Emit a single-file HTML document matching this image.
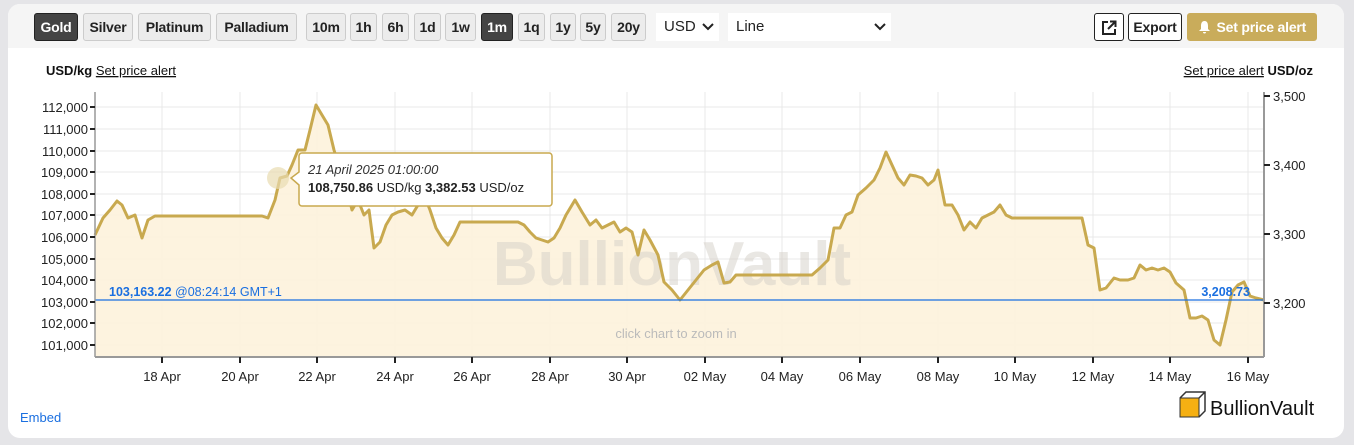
<!DOCTYPE html>
<html><head><meta charset="utf-8"><style>
*{margin:0;padding:0;box-sizing:border-box}
body{width:1354px;height:445px;background:#e5e5e8;font-family:"Liberation Sans",Arial,sans-serif;position:relative;overflow:hidden}
.card{position:absolute;left:8px;top:4px;width:1336px;height:434px;background:#fff;border-radius:12px;overflow:hidden}
.hdr{position:absolute;left:0;top:0;width:100%;height:44px;background:#f5f5f5}
.b{position:absolute;top:9px;height:28px;line-height:26px;border:1px solid #ccc;border-radius:3px;background:#ececec;font-weight:bold;font-size:14px;text-align:center;color:#222;letter-spacing:-0.2px}
.b.on{background:#444;color:#fff;border-color:#222}
.sel{position:absolute;top:9px;height:28px;background:#fff;font-size:15px;line-height:28px;padding-left:8px;color:#222}
svg{position:absolute;left:0;top:0}
</style></head><body>
<div class="card"><div class="hdr">
<div class="b on" style="left:26px;width:44px">Gold</div>
<div class="b" style="left:75px;width:50px">Silver</div>
<div class="b" style="left:130px;width:73px">Platinum</div>
<div class="b" style="left:208px;width:81px">Palladium</div>
<div class="b" style="left:298px;width:40px">10m</div>
<div class="b" style="left:342px;width:27px">1h</div>
<div class="b" style="left:374px;width:27px">6h</div>
<div class="b" style="left:406px;width:27px">1d</div>
<div class="b" style="left:437px;width:31px">1w</div>
<div class="b on" style="left:473px;width:32px">1m</div>
<div class="b" style="left:510px;width:27px">1q</div>
<div class="b" style="left:542px;width:26px">1y</div>
<div class="b" style="left:572px;width:26px">5y</div>
<div class="b" style="left:603px;width:35px">20y</div>
<div class="sel" style="left:648px;width:63px">USD<svg style="position:absolute;left:46px;top:10px" width="12" height="8" viewBox="0 0 12 8"><path d="M1,1 L6,6 L11,1" fill="none" stroke="#222" stroke-width="2"/></svg></div>
<div class="sel" style="left:720px;width:163px">Line<svg style="position:absolute;left:146px;top:10px" width="12" height="8" viewBox="0 0 12 8"><path d="M1,1 L6,6 L11,1" fill="none" stroke="#222" stroke-width="2"/></svg></div>
<div class="b" style="left:1086px;width:30px;background:#fff;border-color:#222"><svg style="position:absolute;left:6px;top:6px" width="16" height="16" viewBox="0 0 16 16"><path d="M7,2 H2 V14 H14 V9" fill="none" stroke="#222" stroke-width="2"/><path d="M9,1.5 H14.5 V7 M14,2 L7,9" fill="none" stroke="#222" stroke-width="2"/></svg></div>
<div class="b" style="left:1120px;width:54px;background:#fff;border-color:#222">Export</div>
<div class="b" style="left:1179px;width:130px;background:#c9ac5b;border-color:#c9ac5b;color:#fff"><svg style="position:static;vertical-align:-2px;margin-right:2px" width="13" height="14" viewBox="0 0 13 14"><path d="M6.5,1 C3.5,1 3,4 3,6 V9 L1,11 H12 L10,9 V6 C10,4 9.5,1 6.5,1Z M5,12 a1.5,1.5 0 0 0 3,0Z" fill="#fff"/></svg> Set price alert</div>
</div></div>
<svg width="1354" height="445" viewBox="0 0 1354 445" font-family="Liberation Sans,Arial,sans-serif">
<text x="46" y="75" font-size="13" font-weight="bold" fill="#111">USD/kg <tspan font-weight="normal" text-decoration="underline">Set price alert</tspan></text>
<text x="1313" y="75" font-size="13" text-anchor="end" fill="#111"><tspan text-decoration="underline">Set price alert</tspan> <tspan font-weight="bold">USD/oz</tspan></text>
<g stroke="#e8e8e8" stroke-width="1">
<line x1="95" y1="107" x2="1264" y2="107"/><line x1="95" y1="129" x2="1264" y2="129"/><line x1="95" y1="151" x2="1264" y2="151"/><line x1="95" y1="172" x2="1264" y2="172"/><line x1="95" y1="194" x2="1264" y2="194"/><line x1="95" y1="215" x2="1264" y2="215"/><line x1="95" y1="237" x2="1264" y2="237"/><line x1="95" y1="259" x2="1264" y2="259"/><line x1="95" y1="280" x2="1264" y2="280"/><line x1="95" y1="302" x2="1264" y2="302"/><line x1="95" y1="323" x2="1264" y2="323"/><line x1="95" y1="345" x2="1264" y2="345"/>
<line x1="162" y1="92" x2="162" y2="356"/><line x1="240" y1="92" x2="240" y2="356"/><line x1="317" y1="92" x2="317" y2="356"/><line x1="395" y1="92" x2="395" y2="356"/><line x1="472" y1="92" x2="472" y2="356"/><line x1="550" y1="92" x2="550" y2="356"/><line x1="627" y1="92" x2="627" y2="356"/><line x1="705" y1="92" x2="705" y2="356"/><line x1="782" y1="92" x2="782" y2="356"/><line x1="860" y1="92" x2="860" y2="356"/><line x1="938" y1="92" x2="938" y2="356"/><line x1="1015" y1="92" x2="1015" y2="356"/><line x1="1093" y1="92" x2="1093" y2="356"/><line x1="1170" y1="92" x2="1170" y2="356"/><line x1="1248" y1="92" x2="1248" y2="356"/>
</g>
<polygon fill="#fdf2dc" opacity="0.9" points="95,356 95,235 103,218 110,210 117,201 122,205 128,218 135,215 142,238 148,220 155,216 262,216 268,218 275,200 280,178 287,176 292,165 298,150 305,150 310,130 316,105 322,115 328,125 334,150 340,170 346,185 352,210 358,200 364,215 369,210 374,248 380,242 386,225 392,215 398,212 405,210 412,215 418,205 424,195 430,210 436,228 442,238 448,245 454,235 460,222 518,222 524,225 530,232 536,238 542,240 548,242 554,238 560,228 566,215 575,200 582,212 590,225 596,220 602,228 608,225 614,222 620,232 626,228 632,232 638,255 644,230 650,240 658,255 664,282 672,290 680,300 688,290 696,280 704,270 712,265 718,262 724,283 730,282 736,275 812,275 820,268 828,260 834,228 840,228 846,215 852,212 858,195 866,188 874,180 880,168 886,152 892,165 898,178 904,185 910,175 916,176 922,178 928,185 934,180 938,170 945,205 952,205 958,215 964,230 970,222 976,228 982,218 988,215 994,212 1000,205 1006,215 1012,218 1082,218 1088,245 1094,248 1100,290 1106,288 1114,278 1120,280 1128,280 1134,278 1140,265 1146,270 1152,268 1158,270 1164,268 1170,272 1176,283 1184,290 1190,318 1196,318 1202,316 1208,320 1214,340 1220,345 1226,320 1232,292 1238,285 1244,282 1250,296 1256,298 1264,300 1264,356"/>
<text x="672" y="285" font-size="62" font-weight="bold" fill="#d5d0c8" opacity="0.5" text-anchor="middle">BullionVault</text>
<polyline fill="none" stroke="#c8a94f" stroke-width="3" stroke-linejoin="round" points="95,235 103,218 110,210 117,201 122,205 128,218 135,215 142,238 148,220 155,216 262,216 268,218 275,200 280,178 287,176 292,165 298,150 305,150 310,130 316,105 322,115 328,125 334,150 340,170 346,185 352,210 358,200 364,215 369,210 374,248 380,242 386,225 392,215 398,212 405,210 412,215 418,205 424,195 430,210 436,228 442,238 448,245 454,235 460,222 518,222 524,225 530,232 536,238 542,240 548,242 554,238 560,228 566,215 575,200 582,212 590,225 596,220 602,228 608,225 614,222 620,232 626,228 632,232 638,255 644,230 650,240 658,255 664,282 672,290 680,300 688,290 696,280 704,270 712,265 718,262 724,283 730,282 736,275 812,275 820,268 828,260 834,228 840,228 846,215 852,212 858,195 866,188 874,180 880,168 886,152 892,165 898,178 904,185 910,175 916,176 922,178 928,185 934,180 938,170 945,205 952,205 958,215 964,230 970,222 976,228 982,218 988,215 994,212 1000,205 1006,215 1012,218 1082,218 1088,245 1094,248 1100,290 1106,288 1114,278 1120,280 1128,280 1134,278 1140,265 1146,270 1152,268 1158,270 1164,268 1170,272 1176,283 1184,290 1190,318 1196,318 1202,316 1208,320 1214,340 1220,345 1226,320 1232,292 1238,285 1244,282 1250,296 1256,298 1264,300"/>
<line x1="95" y1="300" x2="1264" y2="300" stroke="#1a6fe0" stroke-width="1.3"/>
<text x="109" y="296" font-size="12.5" fill="#1a6fe0"><tspan font-weight="bold">103,163.22</tspan> @08:24:14 GMT+1</text>
<text x="1250" y="296" font-size="12.5" fill="#1a6fe0" font-weight="bold" text-anchor="end">3,208.73</text>
<text x="676" y="338" font-size="13" fill="#bbb" text-anchor="middle">click chart to zoom in</text>
<line x1="95" y1="92" x2="95" y2="357" stroke="#999" stroke-width="1.5"/>
<line x1="1264" y1="92" x2="1264" y2="357" stroke="#999" stroke-width="2"/>
<line x1="95" y1="357" x2="1264" y2="357" stroke="#999" stroke-width="2"/>
<g font-size="13" fill="#222" text-anchor="end">
<text x="88" y="112">112,000</text><text x="88" y="134">111,000</text><text x="88" y="156">110,000</text><text x="88" y="177">109,000</text><text x="88" y="199">108,000</text><text x="88" y="220">107,000</text><text x="88" y="242">106,000</text><text x="88" y="264">105,000</text><text x="88" y="285">104,000</text><text x="88" y="307">103,000</text><text x="88" y="328">102,000</text><text x="88" y="350">101,000</text>
</g>
<g stroke="#222" stroke-width="2"><line x1="90" y1="107" x2="95" y2="107"/><line x1="90" y1="129" x2="95" y2="129"/><line x1="90" y1="151" x2="95" y2="151"/><line x1="90" y1="172" x2="95" y2="172"/><line x1="90" y1="194" x2="95" y2="194"/><line x1="90" y1="215" x2="95" y2="215"/><line x1="90" y1="237" x2="95" y2="237"/><line x1="90" y1="259" x2="95" y2="259"/><line x1="90" y1="280" x2="95" y2="280"/><line x1="90" y1="302" x2="95" y2="302"/><line x1="90" y1="323" x2="95" y2="323"/><line x1="90" y1="345" x2="95" y2="345"/>
<line x1="1264" y1="96" x2="1270" y2="96"/><line x1="1264" y1="165" x2="1270" y2="165"/><line x1="1264" y1="234" x2="1270" y2="234"/><line x1="1264" y1="303" x2="1270" y2="303"/></g>
<g font-size="13" fill="#222"><text x="1273" y="101">3,500</text><text x="1273" y="170">3,400</text><text x="1273" y="239">3,300</text><text x="1273" y="308">3,200</text></g>
<g stroke="#222" stroke-width="2"><line x1="162" y1="357" x2="162" y2="363"/><line x1="240" y1="357" x2="240" y2="363"/><line x1="317" y1="357" x2="317" y2="363"/><line x1="395" y1="357" x2="395" y2="363"/><line x1="472" y1="357" x2="472" y2="363"/><line x1="550" y1="357" x2="550" y2="363"/><line x1="627" y1="357" x2="627" y2="363"/><line x1="705" y1="357" x2="705" y2="363"/><line x1="782" y1="357" x2="782" y2="363"/><line x1="860" y1="357" x2="860" y2="363"/><line x1="938" y1="357" x2="938" y2="363"/><line x1="1015" y1="357" x2="1015" y2="363"/><line x1="1093" y1="357" x2="1093" y2="363"/><line x1="1170" y1="357" x2="1170" y2="363"/><line x1="1248" y1="357" x2="1248" y2="363"/></g>
<g font-size="13" fill="#222" text-anchor="middle"><text x="162" y="381">18 Apr</text><text x="240" y="381">20 Apr</text><text x="317" y="381">22 Apr</text><text x="395" y="381">24 Apr</text><text x="472" y="381">26 Apr</text><text x="550" y="381">28 Apr</text><text x="627" y="381">30 Apr</text><text x="705" y="381">02 May</text><text x="782" y="381">04 May</text><text x="860" y="381">06 May</text><text x="938" y="381">08 May</text><text x="1015" y="381">10 May</text><text x="1093" y="381">12 May</text><text x="1170" y="381">14 May</text><text x="1248" y="381">16 May</text></g>
<circle cx="278" cy="178" r="11" fill="#e8dcb0" opacity="0.7"/>
<path d="M302,153 H549 a3,3 0 0 1 3,3 V203 a3,3 0 0 1 -3,3 H302 a3,3 0 0 1 -3,-3 V185 L291,178 L299,172 V156 a3,3 0 0 1 3,-3Z" fill="#fff" stroke="#c8a94f" stroke-width="1.5"/>
<text x="308" y="174" font-size="13" font-style="italic" fill="#333">21 April 2025 01:00:00</text>
<text x="308" y="192" font-size="13" fill="#222"><tspan font-weight="bold">108,750.86</tspan> USD/kg <tspan font-weight="bold">3,382.53</tspan> USD/oz</text>
<text x="20" y="422" font-size="13" fill="#1a6fe0">Embed</text>
<rect x="1180" y="398" width="19" height="19" fill="#f6b012" stroke="#333"/>
<path d="M1180,398 l6,-6 h19 v19 l-6,6 M1199,398 l6,-6" fill="none" stroke="#333" stroke-width="1.5"/>
<text x="1210" y="415" font-size="20" fill="#111">BullionVault</text>
</svg>
</body></html>
